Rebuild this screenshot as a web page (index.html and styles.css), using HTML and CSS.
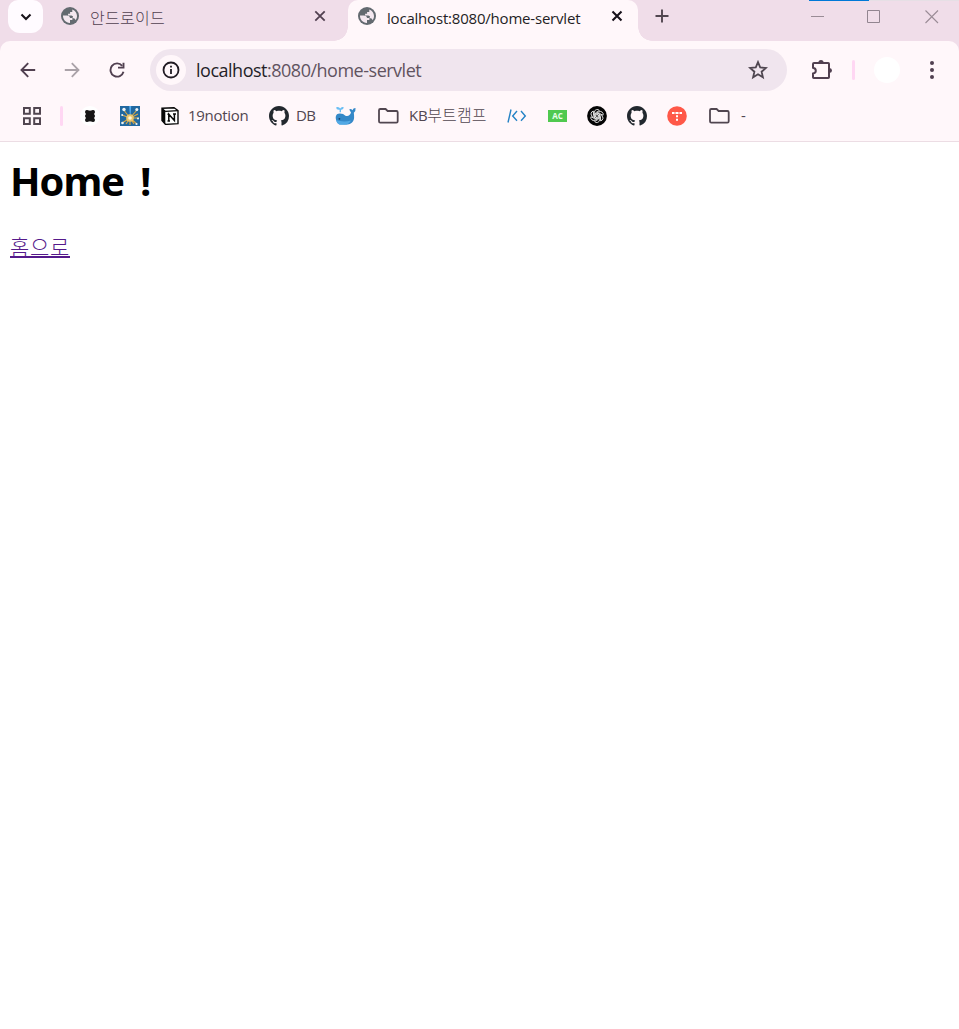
FILE: index.html
```html
<!DOCTYPE html>
<html lang="ko">
<head>
<meta charset="utf-8">
<title>localhost:8080/home-servlet</title>
<link rel="stylesheet" href="styles.css">
</head>
<body>
<svg class="defs" aria-hidden="true">
  <symbol id="globe" viewBox="0 0 18 18">
    <circle cx="9" cy="9" r="9" fill="#636a70"/>
    <path fill="#f4e8f0" d="M2 8.5H5.8Q8.9 8.7 9 11H11.4V13.1H9V15.9C5 16 1.8 12.5 2 8.5ZM11.3 2.4C14.1 3.4 16 6 16 9 16 10.6 15.5 12 14.6 13.2 14.3 11.8 13 11.1 11.5 11L12 9.2 10.4 8.6H7.1V6.8H9.1V4.9H11.3Z"/>
  </symbol>
  <symbol id="octocat" viewBox="0 0 16 16">
    <path fill="#22282e" d="M8 0C3.58 0 0 3.58 0 8c0 3.54 2.29 6.53 5.47 7.59.4.07.55-.17.55-.38 0-.19-.01-.82-.01-1.49-2.01.37-2.53-.49-2.69-.94-.09-.23-.48-.94-.82-1.13-.28-.15-.68-.52-.01-.53.63-.01 1.08.58 1.23.82.72 1.21 1.87.87 2.33.66.07-.52.28-.87.51-1.07-1.78-.2-3.64-.89-3.64-3.95 0-.87.31-1.59.82-2.15-.08-.2-.36-1.02.08-2.12 0 0 .67-.21 2.2.82.64-.18 1.32-.27 2-.27s1.36.09 2 .27c1.53-1.04 2.2-.82 2.2-.82.44 1.1.16 1.92.08 2.12.51.56.82 1.27.82 2.15 0 3.07-1.87 3.75-3.65 3.95.29.25.54.73.54 1.48 0 1.07-.01 1.93-.01 2.2 0 .21.15.46.55.38A8.01 8.01 0 0 0 16 8c0-4.42-3.58-8-8-8z"/>
  </symbol>
  <symbol id="folder" viewBox="0 0 21 16">
    <path d="M2.3 1H7.6L9.6 3H18.4Q19.7 3 19.7 4.3V13.2Q19.7 14.6 18.4 14.6H2.3Q1 14.6 1 13.2V2.3Q1 1 2.3 1Z" fill="none" stroke="#514650" stroke-width="1.8"/>
  </symbol>
</svg>

<header class="browser">
  <div class="tabstrip">
    <button class="tab-search" aria-label="탭 검색"><svg width="12" height="8" viewBox="0 0 12 8"><path d="M1.5 1.5 6 6 10.5 1.5" fill="none" stroke="#18131a" stroke-width="2.1"/></svg></button>
    <div class="tab">
      <svg class="globe"><use href="#globe"/></svg>
      <span class="tab-title korean">안드로이드</span>
      <svg class="close" viewBox="0 0 12 12"><path d="m1.3 1.3 9.4 9.4M10.7 1.3 1.3 10.7" stroke="#514050" stroke-width="1.8"/></svg>
    </div>
    <div class="tab active">
      <svg class="globe"><use href="#globe"/></svg>
      <span class="tab-title">localhost:8080/home-servlet</span>
      <svg class="close" viewBox="0 0 12 12"><path d="m1.5 1.5 9 9M10.5 1.5 1.5 10.5" stroke="#16111a" stroke-width="2.1"/></svg>
    </div>
    <svg class="new-tab" viewBox="0 0 14 14"><path d="M7 .5V13.5M.5 7H13.5" stroke="#514650" stroke-width="1.9"/></svg>
    <div class="window-controls">
      <svg width="14" height="14" viewBox="0 0 14 14"><path d="M0 6.5H13" stroke="#9a8c96"/></svg>
      <svg width="14" height="14" viewBox="0 0 14 14"><path d="M.5.5H12.5V12.5H.5Z" fill="none" stroke="#928590"/></svg>
      <svg width="14" height="14" viewBox="0 0 14 14"><path d="m.5.5 12.5 12.5M13 .5.5 13" stroke="#9a8c96" stroke-width="1.1"/></svg>
    </div>
  </div>

  <div class="chrome-panel">
    <nav class="toolbar">
      <svg class="back" viewBox="0 0 16 16"><path d="M15.2 8H1.8M8.2 1.2 1.5 8l6.7 6.8" fill="none" stroke="#514050" stroke-width="1.9"/></svg>
      <svg class="forward" viewBox="0 0 16 16"><path d="M.8 8H14.2M7.8 1.2 14.5 8l-6.7 6.8" fill="none" stroke="#aaa2a8" stroke-width="1.8"/></svg>
      <svg class="reload" viewBox="0 0 16 16"><path d="M13.2 3.8A6.6 6.6 0 1 0 14.5 9.7" fill="none" stroke="#514050" stroke-width="1.9"/><path d="M14.5.7V5.6H9" fill="none" stroke="#514050" stroke-width="1.9"/></svg>
      <div class="address">
        <span class="site-info"><svg width="18" height="18" viewBox="0 0 18 18"><circle cx="9" cy="9" r="7.5" fill="none" stroke="#211b23" stroke-width="1.8"/><path d="M9 8V13M9 4.7V6.4" stroke="#211b23" stroke-width="1.8"/></svg></span>
        <span class="url">localhost<span class="path">:8080/home-servlet</span></span>
        <svg class="star" viewBox="0 0 20 20"><path d="m10 2.1 2.2 5.3 5.8.5-4.4 3.8 1.3 5.6-4.9-3-4.9 3 1.3-5.6L2 7.9l5.8-.5Z" fill="none" stroke="#4f4650" stroke-width="1.8"/></svg>
      </div>
      <svg class="puzzle" viewBox="0 0 22 22"><path d="M3 4H17.2Q18 4 18 4.8V18.2Q18 19 17.2 19H2.8Q2 19 2 18.2V14.5Q4.8 14 4.8 11.7T2 8.8V5Q2 4 3 4Z" fill="none" stroke="#514050" stroke-width="2"/><path d="M7.4 3.5a2.6 2.6 0 0 1 5.2 0ZM18.5 9a2.5 2.5 0 0 1 0 5Z" fill="#514050"/></svg>
      <span class="divider"></span>
      <span class="avatar"></span>
      <svg class="menu" viewBox="0 0 6 20"><g fill="#514050"><circle cx="3" cy="3.1" r="2"/><circle cx="3" cy="10" r="2"/><circle cx="3" cy="16.9" r="2"/></g></svg>
    </nav>

    <nav class="bookmarks">
      <svg class="apps" viewBox="0 0 18 18"><path d="M1 1H6.8V6.8H1ZM11.2 1H17V6.8H11.2ZM1 11.2H6.8V17H1ZM11.2 11.2H17V17H11.2Z" fill="none" stroke="#514650" stroke-width="2"/></svg>
      <span class="divider"></span>
      <svg class="icon clover" viewBox="0 0 20 20"><circle cx="10" cy="10" r="10" fill="#fff"/><path d="M6 4.6H14V15.4H6Z" fill="#171717"/><g fill="#171717"><circle cx="7" cy="6" r="2"/><circle cx="13" cy="6" r="2"/><circle cx="7" cy="10" r="2"/><circle cx="13" cy="10" r="2"/><circle cx="7" cy="14" r="2"/><circle cx="13" cy="14" r="2"/></g></svg>
      <svg class="icon spark" viewBox="0 0 20 20"><path fill="#2168a0" d="M0 0H20V20H0Z"/><path d="M9.2 0H11.2L10.6 9H9.8Z" fill="#55adf0"/><path d="M10 12 3 3M10 12 17 4M10 12 2 9M10 12H19M10 12 2 17M10 12 17 18M10 12V19M10 12 6 18M10 12 14 18M10 12 18 8" stroke="#dba943" stroke-width="1.1"/><circle cx="10" cy="12" r="3.8" fill="#eac46c"/><circle cx="10" cy="12" r="1.8" fill="#fff8da"/><g fill="#edf3f5"><circle cx="4" cy="3.5" r="1.7"/><circle cx="16.8" cy="3.5" r="1.5"/><circle cx="2.2" cy="9" r="1"/><circle cx="2.5" cy="17" r="1.3"/><circle cx="18" cy="12.5" r="1"/><circle cx="16.5" cy="18" r="1.1"/></g></svg>
      <svg class="notion" viewBox="0 0 18 18"><path d="M1 1.2 13 .7 17 3.5V16.6L4.5 17.4 1 13.5Z" fill="#fff" stroke="#080808" stroke-width="1.4"/><path d="M1 1.2 4.3 4.5V17L1 13.5Z" fill="#080808"/><path d="M1.5 2 4.6 4.4 17 3.6" fill="none" stroke="#080808" stroke-width="1.1"/><path d="M7.8 14V7.2L13.4 13.6V6.7M6.5 7.3H8.5M12 6.9H15M6.5 14H9" fill="none" stroke="#080808" stroke-width="1.5"/></svg>
      <span class="label notion-label">19notion</span>
      <svg class="icon github-db"><use href="#octocat"/></svg>
      <span class="label db-label">DB</span>
      <svg class="whale" viewBox="0 0 21 20"><path d="M.7 11Q1.2 7.5 5 7.6 8.5 7.6 10.4 9.7 14.7 10.8 16 6.5L14.2 3.5Q16 2.4 17.4 4.2 18.3 1.8 20.5 1.9 21 5.3 18.8 6.8 20.7 18 12 18.5L4.5 18.3Q.5 16 .7 11Z" fill="#3488c8"/><path d="M1 14Q8 16.5 16 14.5 14 18.5 10 18.8H4.5Q1.5 17.5 1 14Z" fill="#52a9e5"/><path d="M4.6 6.2V3.7Q1.2 4 1.2 1.2 4 .2 5.2 2.5 6.5.2 8.8 1.3 8.5 4 6 3.7V6.2Z" fill="#69bef4"/><circle cx="4.4" cy="12.8" r=".9" fill="#173f66"/></svg>
      <svg class="folder kb-folder"><use href="#folder"/></svg>
      <span class="label kb-label">KB<span class="kb-korean">부트캠프</span></span>
      <svg class="code" viewBox="0 0 20 16"><path d="M1 14.5 4 1.5M10 3 5.7 8 10 12.7M14 3 18.3 8 14 12.7" fill="none" stroke="#2583c5" stroke-width="1.4"/></svg>
      <span class="ac">AC</span>
      <svg class="icon openai" viewBox="0 0 20 20"><circle cx="10" cy="10" r="9.9" fill="#050505"/><g fill="none" stroke="#eee" stroke-width=".85"><path id="petal" d="M7.4 11.5V6.2a2.8 2.8 0 0 1 5-1.7L8.7 6.7V11"/><use href="#petal" transform="rotate(60 10 10)"/><use href="#petal" transform="rotate(120 10 10)"/><use href="#petal" transform="rotate(180 10 10)"/><use href="#petal" transform="rotate(240 10 10)"/><use href="#petal" transform="rotate(300 10 10)"/></g></svg>
      <svg class="icon github"><use href="#octocat"/></svg>
      <svg class="icon red" viewBox="0 0 20 20"><circle cx="10" cy="10" r="9.8" fill="#ff5848"/><path d="M5 6h2v2H5zM9 6h2v2H9zM13 6h2v2h-2zM9 9.3h2v2H9zM9 12.7h2v2H9z" fill="#fff"/><path d="M7 6h2v2H7zM11 6h2v2h-2z" fill="#ffb1a9"/></svg>
      <svg class="folder last-folder"><use href="#folder"/></svg>
      <span class="label dash">-</span>
    </nav>
  </div>
</header>

<main>
  <h1>Home<span class="mark">!</span></h1>
  <a href="#">홈으로</a>
</main>
</body>
</html>
```

FILE: styles.css
```css
* { box-sizing: border-box; }
body {
  margin: 0;
  min-height: 100vh;
  background: #fff;
  font-family: "Open Sans", "Noto Sans CJK KR", sans-serif;
}
svg { display: block; flex: none; }
.defs { position: absolute; width: 0; height: 0; }
.browser { background: #f0dde9; height: 142px; }
.tabstrip { display: flex; height: 41px; align-items: flex-start; }
.tab-search {
  width: 35px; height: 33px; margin-left: 8px; padding: 0;
  display: flex; align-items: center; justify-content: center;
  border: 0; border-radius: 10px 10px 12px 12px; background: #fffbff;
}
.tab { display: flex; align-items: flex-start; width: 305px; height: 41px; padding: 7px 22px 0 18px; }
.globe { width: 18px; height: 18px; }
.tab-title {
  flex: 1; margin-left: 11px; font-size: 15px; line-height: 22px;
  color: #514050; white-space: nowrap; letter-spacing: -.2px;
}
.korean { font-family: "Noto Sans CJK KR", sans-serif; font-size: 16px; font-weight: 300; line-height: 20px; letter-spacing: .3px; }
.close { width: 12px; height: 12px; margin-top: 3px; }
.active { position: relative; width: 290px; padding: 7px 15px 0 10px; background: #fff7fa; border-radius: 10px 10px 0 0; }
.active .tab-title { color: #241e25; }
.active::before, .active::after { content: ""; position: absolute; bottom: 0; width: 14px; height: 14px; }
.active::before { left: -14px; background: radial-gradient(circle at 0 0, #f0dde9 13.5px, #fff7fa 14px); }
.active::after { right: -14px; background: radial-gradient(circle at 100% 0, #f0dde9 13.5px, #fff7fa 14px); }
.new-tab { width: 14px; height: 14px; margin: 9px 0 0 17px; }
.window-controls {
  display: flex; gap: 42px; width: 150px; height: 40px; margin-left: auto; padding: 10px 0 0 2px;
  background: linear-gradient(90deg, #0078d7 60px, #e6dfe5 60px) no-repeat 0 0 / 150px 1px;
}
.window-controls svg:last-child { margin-left: 2px; }
.chrome-panel { height: 101px; background: #fff7fa; border-bottom: 1px solid #ecdde4; border-radius: 10px 10px 0 0; }
.toolbar { display: flex; height: 58px; align-items: center; }
.back { width: 16px; height: 16px; margin-left: 20px; }
.forward { width: 16px; height: 16px; margin-left: 28px; }
.reload { width: 16px; height: 16px; margin-left: 29px; }
.address { display: flex; align-items: center; width: 637px; height: 42px; margin-left: 25px; padding: 0 19px 0 6px; border-radius: 21px; background: #f0e5ee; }
.site-info { display: flex; align-items: center; justify-content: center; width: 30px; height: 30px; border-radius: 50%; background: #fff7fa; }
.url { flex: 1; margin-left: 10px; font-size: 18px; line-height: 26px; letter-spacing: -.49px; color: #241e27; }
.path { color: #61535f; }
.star { width: 20px; height: 20px; }
.puzzle { width: 22px; height: 22px; margin: 0 0 0 24px; }
.divider { width: 3px; height: 20px; border-radius: 2px; background: #ffd7f3; }
.toolbar .divider { margin-left: 19px; }
.avatar { width: 26px; height: 26px; margin-left: 19px; border-radius: 50%; background: #fff; }
.menu { width: 6px; height: 20px; margin-left: 29px; }
.bookmarks { display: flex; align-items: center; height: 34px; }
.apps { width: 18px; height: 18px; margin-left: 23px; }
.bookmarks .divider { margin-left: 19px; }
.icon { width: 20px; height: 20px; }
.clover { margin-left: 17px; }
.spark { margin-left: 20px; }
.notion { width: 18px; height: 18px; margin-left: 21px; }
.label { flex: none; font-size: 15px; line-height: 22px; padding-bottom: 2px; color: #514650; white-space: nowrap; }
.notion-label { width: 61px; margin-left: 9px; letter-spacing: -.3px; }
.github-db { margin-left: 20px; }
.db-label { width: 20px; margin-left: 7px; letter-spacing: -.7px; }
.whale { width: 21px; height: 20px; margin-left: 19px; }
.folder { width: 21px; height: 16px; }
.kb-folder { margin-left: 22px; }
.kb-label { width: 79px; margin-left: 10px; letter-spacing: -.3px; }
.kb-korean { font-family: "Noto Sans CJK KR", sans-serif; font-size: 16px; font-weight: 300; line-height: 20px; letter-spacing: .1px; }
.code { width: 20px; height: 16px; margin-left: 19px; }
.ac { width: 19px; height: 12px; margin-left: 21px; background: #50c94f; color: #eaffea; font: bold 8px/12px "Open Sans", sans-serif; text-align: center; }
.openai { margin-left: 20px; }
.github { margin-left: 20px; }
.red { margin-left: 20px; }
.last-folder { margin-left: 22px; }
.dash { margin-left: 11px; }
main { padding: 11px 10px; }
h1 { margin: 0; font-size: 40px; line-height: 56px; font-weight: 700; letter-spacing: -1.1px; color: #000; }
.mark { margin-left: 16px; }
main a {
  display: inline-block; margin-top: 25px; height: 24px; border-bottom: 2px solid #551a8b;
  color: #551a8b; font: 300 21px/25px "Noto Sans CJK KR", sans-serif; letter-spacing: .7px; text-decoration: none;
}
```
